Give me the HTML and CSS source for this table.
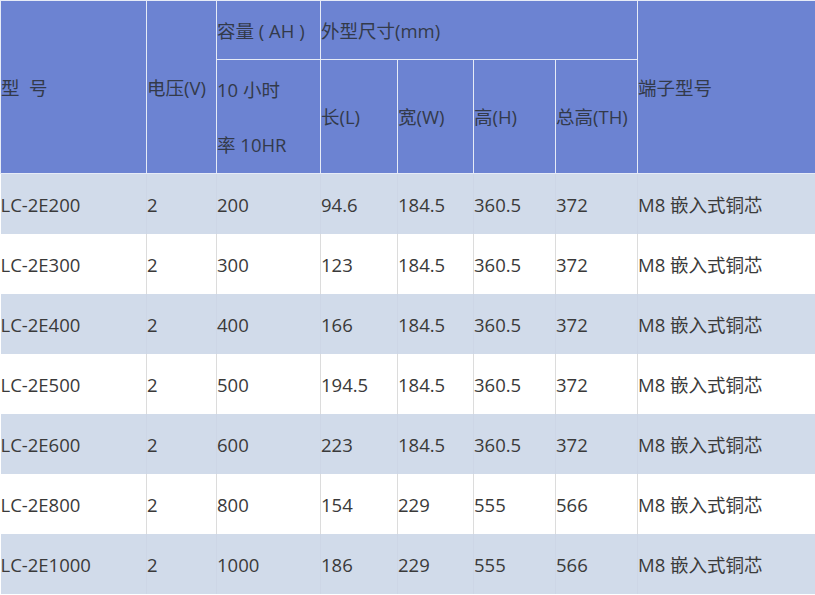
FILE: index.html
```html
<!DOCTYPE html>
<html lang="zh-CN">
<head>
<meta charset="utf-8">
<title>规格表</title>
<link rel="stylesheet" href="styles.css">
</head>
<body>
<table class="spec">
  <colgroup>
    <col class="c1"><col class="c2"><col class="c3"><col class="c4"><col class="c5"><col class="c6"><col class="c7"><col class="c8">
  </colgroup>
  <thead>
    <tr class="h1">
      <th rowspan="2">型&nbsp; 号</th>
      <th rowspan="2">电压(V)</th>
      <th>容量 ( AH )</th>
      <th colspan="4">外型尺寸(mm)</th>
      <th rowspan="2">端子型号</th>
    </tr>
    <tr class="h2">
      <th>10 小时<br>率 10HR</th>
      <th>长(L)</th>
      <th>宽(W)</th>
      <th>高(H)</th>
      <th>总高(TH)</th>
    </tr>
  </thead>
  <tbody>
    <tr class="odd"><td>LC-2E200</td><td>2</td><td>200</td><td>94.6</td><td>184.5</td><td>360.5</td><td>372</td><td>M8 嵌入式铜芯</td></tr>
    <tr class="even"><td>LC-2E300</td><td>2</td><td>300</td><td>123</td><td>184.5</td><td>360.5</td><td>372</td><td>M8 嵌入式铜芯</td></tr>
    <tr class="odd"><td>LC-2E400</td><td>2</td><td>400</td><td>166</td><td>184.5</td><td>360.5</td><td>372</td><td>M8 嵌入式铜芯</td></tr>
    <tr class="even"><td>LC-2E500</td><td>2</td><td>500</td><td>194.5</td><td>184.5</td><td>360.5</td><td>372</td><td>M8 嵌入式铜芯</td></tr>
    <tr class="odd"><td>LC-2E600</td><td>2</td><td>600</td><td>223</td><td>184.5</td><td>360.5</td><td>372</td><td>M8 嵌入式铜芯</td></tr>
    <tr class="even"><td>LC-2E800</td><td>2</td><td>800</td><td>154</td><td>229</td><td>555</td><td>566</td><td>M8 嵌入式铜芯</td></tr>
    <tr class="odd"><td>LC-2E1000</td><td>2</td><td>1000</td><td>186</td><td>229</td><td>555</td><td>566</td><td>M8 嵌入式铜芯</td></tr>
  </tbody>
</table>
</body>
</html>
```

FILE: styles.css
```css
html, body {
  margin: 0;
  padding: 0;
  background: #ffffff;
}

.spec {
  border-collapse: collapse;
  table-layout: fixed;
  width: 815px;
  font-family: "Open Sans", "Noto Sans CJK SC", sans-serif;
  font-size: 18.5px;
  color: #3a3a3a;
}

.c1 { width: 146px; }
.c2 { width: 70px; }
.c3 { width: 104px; }
.c4 { width: 77px; }
.c5 { width: 76px; }
.c6 { width: 82px; }
.c7 { width: 82px; }
.c8 { width: 178px; }

.spec th,
.spec td {
  padding: 0;
  text-align: left;
  vertical-align: middle;
  font-weight: normal;
  line-height: 55px;
  white-space: nowrap;
}

.spec th {
  background: #6c83d2;
  color: #333a4a;
  border: 1px solid #e6ebf7;
}

.h1 th { height: 58px; }
.h2 th { height: 113px; }

.spec td {
  height: 60px;
  border-left: 1px solid #dcdcdc;
}

.spec td:first-child { border-left: none; }

.odd td {
  background: #d1dbea;
  border-left-color: #cdd6e6;
}

.even td {
  background: #ffffff;
}
```
